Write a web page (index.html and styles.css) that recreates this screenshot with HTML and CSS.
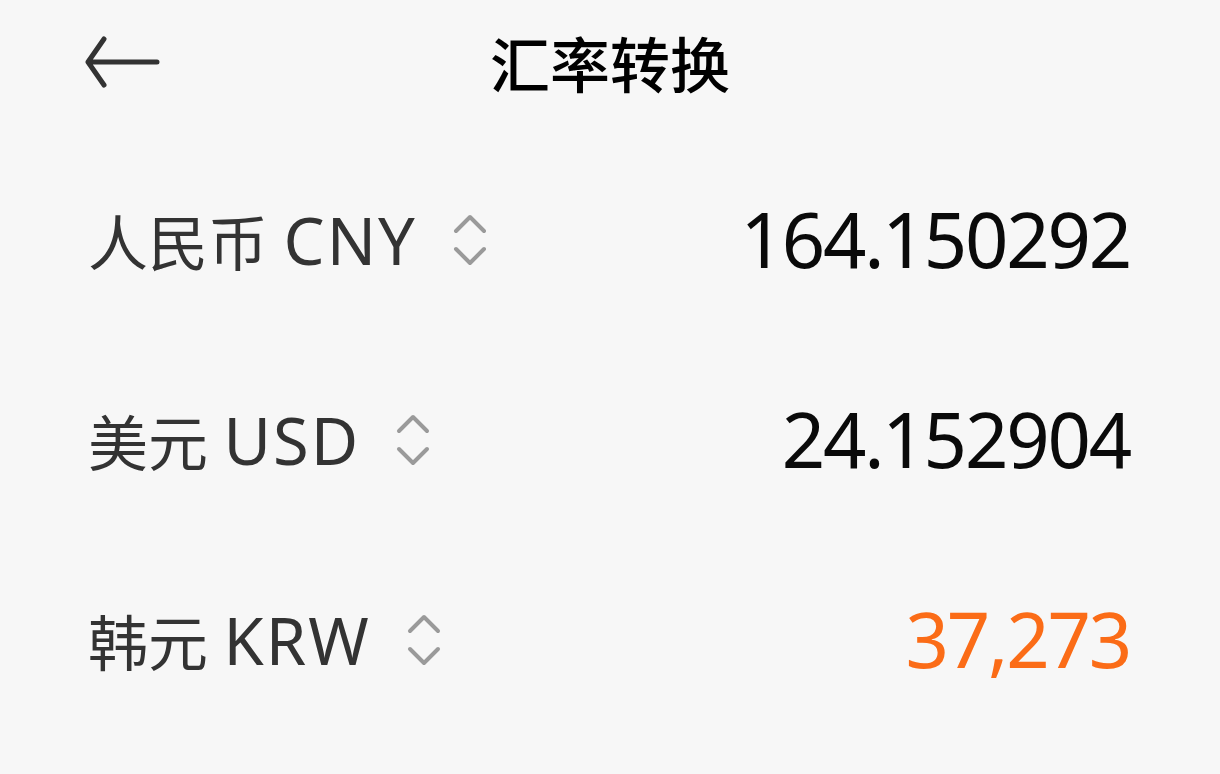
FILE: index.html
```html
<!DOCTYPE html>
<html lang="zh-CN">
<head>
<meta charset="UTF-8" />
<meta name="viewport" content="width=device-width, initial-scale=1" />
<title>汇率转换</title>
<link rel="stylesheet" href="styles.css">
</head>
<body>
<div class="page">
  <div class="header">
    <svg class="back" width="76" height="56" viewBox="0 0 76 56">
      <path d="M72 27 H4 M19 4 L3 27 L19 50" fill="none" stroke="#333" stroke-width="5" stroke-linecap="round" stroke-linejoin="round"/>
    </svg>
    <h1>汇率转换</h1>
  </div>

  <div class="row">
    <div class="label">人民币 <span class="code">CNY</span>
      <svg class="switch" width="34" height="52" viewBox="0 0 34 52"><path d="M3 17 L17 3 L31 17 M3 35 L17 49 L31 35" fill="none" stroke="#9a9a9a" stroke-width="4" stroke-linecap="round" stroke-linejoin="round"/></svg>
    </div>
    <div class="value">164.150292</div>
  </div>

  <div class="row">
    <div class="label">美元 <span class="code">USD</span>
      <svg class="switch" width="34" height="52" viewBox="0 0 34 52"><path d="M3 17 L17 3 L31 17 M3 35 L17 49 L31 35" fill="none" stroke="#9a9a9a" stroke-width="4" stroke-linecap="round" stroke-linejoin="round"/></svg>
    </div>
    <div class="value">24.152904</div>
  </div>

  <div class="row">
    <div class="label">韩元 <span class="code">KRW</span>
      <svg class="switch" width="34" height="52" viewBox="0 0 34 52"><path d="M3 17 L17 3 L31 17 M3 35 L17 49 L31 35" fill="none" stroke="#9a9a9a" stroke-width="4" stroke-linecap="round" stroke-linejoin="round"/></svg>
    </div>
    <div class="value active">37,273</div>
  </div>
</div>
</body>
</html>
```

FILE: styles.css
```css
body {
  margin: 0;
  background-color: #f7f7f7;
  font-family: "Noto Sans", "Noto Sans CJK SC", sans-serif;
  color: #333;
}
.page {
  width: 1220px;
  height: 774px;
}
.header {
  height: 140px;
  display: flex;
  align-items: flex-start;
  justify-content: center;
  position: relative;
}
.back {
  position: absolute;
  left: 85px;
  top: 35px;
}
h1 {
  margin: 0;
  margin-top: 22px;
  font-size: 60px;
  font-weight: 500;
  line-height: 80px;
  color: #000;
  font-family: "Noto Sans CJK SC", sans-serif;
}
.row {
  height: 200px;
  display: flex;
  align-items: center;
  justify-content: space-between;
  padding: 0 90px 0 88px;
}
.label {
  display: flex;
  align-items: center;
  font-size: 60px;
  color: #333;
  white-space: pre;
}
.code {
  font-size: 65px;
  letter-spacing: 2px;
}
.switch {
  margin-left: 36px;
}
.value {
  font-size: 76px;
  color: #0a0a0a;
  letter-spacing: -2.2px;
  margin-top: -4px;
}
.value.active {
  color: #fb6c17;
}
```
